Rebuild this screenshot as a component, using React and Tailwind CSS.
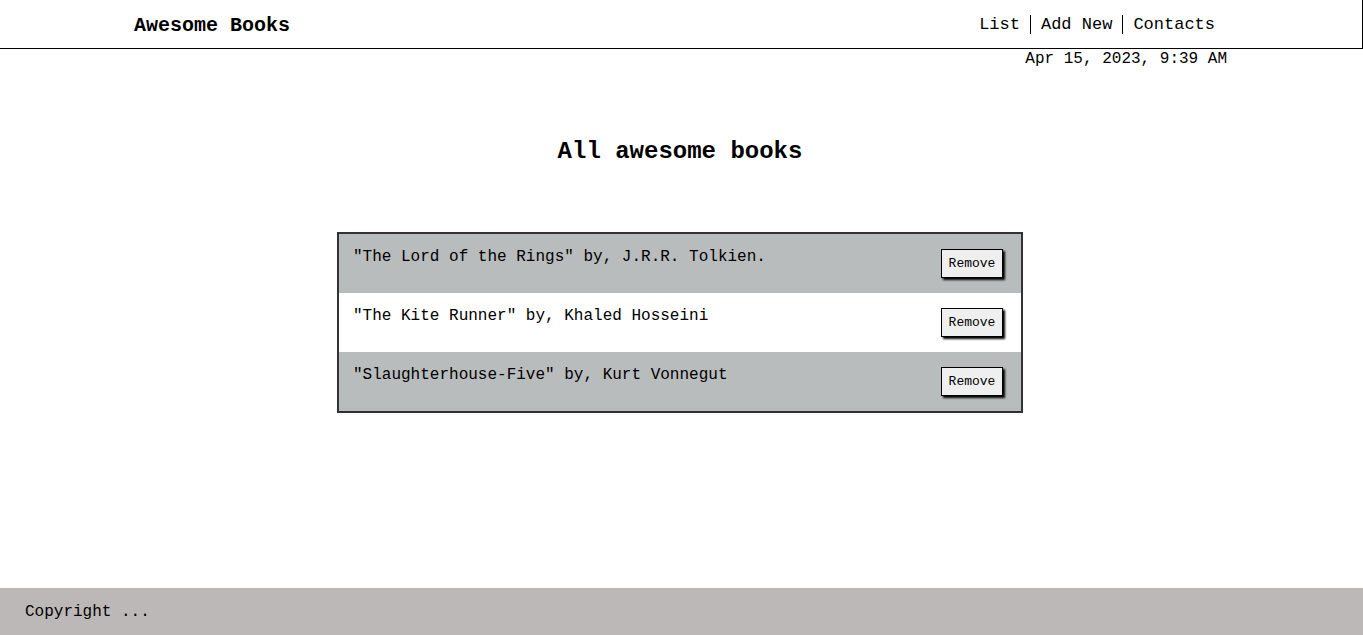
const books = [
  { title: "The Lord of the Rings", author: "J.R.R. Tolkien." },
  { title: "The Kite Runner", author: "Khaled Hosseini" },
  { title: "Slaughterhouse-Five", author: "Kurt Vonnegut" },
];

function Header() {
  return (
    <header className="h-[49px] border-b border-r border-black flex items-center justify-between pl-[134px] pr-[137px]">
      <h1 className="text-[20px] font-bold leading-none mt-[3px]">Awesome Books</h1>
      <nav className="flex items-center text-[17px] leading-[19px]">
        <a className="pr-[10px]">List</a>
        <a className="px-[10px] border-l border-black">Add New</a>
        <a className="pl-[10px] pr-[10px] border-l border-black">Contacts</a>
      </nav>
    </header>
  );
}

function BookRow({ book, index }) {
  return (
    <li
      className={
        "h-[59px] flex justify-between items-start pl-[14px] pr-[18px] pt-[14px] " +
        (index % 2 === 0 ? "bg-[#b9bcbc]" : "bg-white")
      }
    >
      <p className="text-[16px] leading-[18px]">
        "{book.title}" by, {book.author}
      </p>
      <button className="mt-[1px] w-[62px] h-[29px] bg-[#efefef] border border-black text-[13px] shadow-[2px_2px_2px_#000]">
        Remove
      </button>
    </li>
  );
}

export default function App() {
  return (
    <div
      className="min-h-screen flex flex-col bg-white text-black"
      style={{ fontFamily: '"Liberation Mono", "Courier New", monospace' }}
    >
      <Header />
      <div className="flex justify-end pr-[136px] pt-[1px] text-[16px] leading-[18px]">
        Apr 15, 2023, 9:39 AM
      </div>
      <main className="flex-1 flex flex-col items-center pr-[3px]">
        <h2 className="mt-[70px] text-[24px] font-bold leading-[28px]">All awesome books</h2>
        <ul className="mt-[66px] w-[686px] border-2 border-[#333]">
          {books.map((b, i) => (
            <BookRow key={i} book={b} index={i} />
          ))}
        </ul>
      </main>
      <footer className="h-[47px] bg-[#bcb8b7] flex items-center pl-[25px] text-[16px]">
        Copyright ...
      </footer>
    </div>
  );
}
